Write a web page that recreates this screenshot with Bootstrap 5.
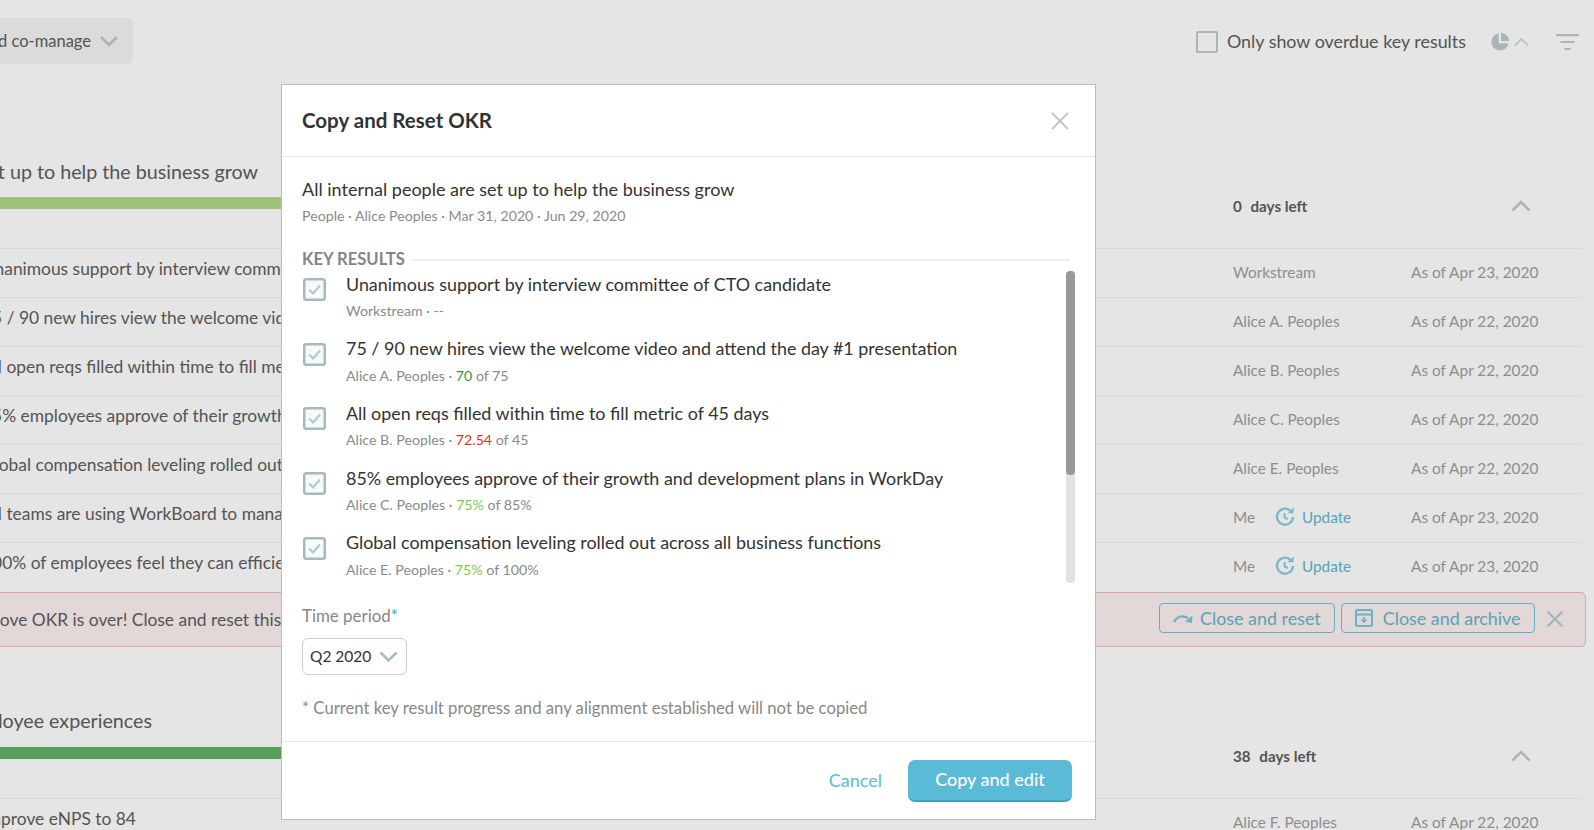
<!DOCTYPE html>
<html lang="en">
<head>
    <meta charset="UTF-8">
    <meta name="viewport" content="width=device-width, initial-scale=1.0">
    <title>Copy and Reset OKR</title>
    <link href="https://cdn.jsdelivr.net/npm/bootstrap@5.3.0/dist/css/bootstrap.min.css" rel="stylesheet">
    <style>
        html, body { overflow: hidden; height: 100%; }
        body { font-family: "Lato", "Liberation Sans", sans-serif; font-size: 17px; color: #333; background: #fff; }
        .modal-backdrop { --bs-backdrop-opacity: .1; }

        /* page behind the dialog (scrolled sideways, so it starts off screen) */
        .okr-page { margin-left: -13px; width: 1596px; color: #5e5e5e; }
        .okr-top { padding-top: 18px; }
        .owner-drop { width: 146px; height: 46px; background: #f4f4f4; border-radius: 5px; font-size: 16.5px; white-space: nowrap; overflow: hidden; padding-right: 14px; gap: 8px; }
        .owner-drop svg { flex: none; }
        .top-tools { margin-top: 12px; }
        .overdue-box { width: 22px; height: 22px; border: 2.5px solid #bccacf; border-radius: 2px; margin-right: 9px; }
        .overdue-label { font-size: 17.9px; line-height: 22px; margin-right: 24px; margin-bottom: 2px; }
        .filter-icon { margin-left: 27px; margin-right: 4px; }
        .okr-title { font-size: 19.7px; line-height: 28px; white-space: nowrap; margin-left: -300px; text-align: right; }
        .okr-title.first { margin-top: 94px; width: 571px; }
        .okr-title.second { margin-top: 60px; width: 465px; }
        .okr-head { height: 51px; margin-top: 11px; }
        .okr-head.second { margin-top: 12px; height: 51px; }
        .okr-bar { width: 1100px; height: 12px; flex: none; }
        .bar-light { background: #b1da8c; }
        .bar-dark { background: #64b065; }
        .days-left { margin-left: 146px; width: 278px; font-size: 15.2px; line-height: 22px; font-weight: 700; margin-top: -2px; }
        .days-left span { margin-right: 5px; }
        .head-chevron { margin-top: 3px; }
        .okr-row { height: 49px; border-top: 1px solid #f3f3f3; width: 1596px; }
        .okr-name { width: 1251px; margin-left: -5px; flex: none; white-space: nowrap; overflow: hidden; padding-bottom: 7px; font-size: 17.4px; }
        .okr-owner { width: 178px; flex: none; font-size: 15.3px; color: #9e9e9e; padding-bottom: 2px; }
        .okr-date { font-size: 15.4px; color: #9e9e9e; white-space: nowrap; }
        .me-label { width: 42px; }
        .update-link { color: #64b5cc; font-size: 15.3px; gap: 7px; }
        .okr-alert { margin: 1px 0 0 -10px; width: 1609px; height: 55px; background: #fcf1f1; border: 1px solid #f9b7b7; border-radius: 5px; }
        .alert-text { width: 1211px; margin-left: -30px; padding-top: 2px; flex: none; white-space: nowrap; overflow: hidden; font-size: 17.4px; }
        .btn-outline-okr { height: 30px; margin-bottom: 3px; border: 1px solid #6fc2dc; border-radius: 4px; color: #64b5cc; font-size: 17.9px; line-height: 28px; padding: 0 13px; gap: 7px; white-space: nowrap; }
        .btn-outline-okr.archive { margin-left: 6px; gap: 10px; }
        .alert-x { margin-left: 11px; margin-bottom: 2px; }

        /* dialog */
        .modal-dialog.okr-dialog { margin: 84px 0 0 281px; max-width: none; width: 815px; }
        .okr-dialog .modal-content { height: 736px; border: 1px solid #bcbcbc; border-radius: 0; }
        .okr-dialog .modal-header { height: 72px; padding: 0 26px 0 20px; border-bottom: 1px solid #e6e6e6; border-radius: 0; }
        .okr-dialog .modal-title { font-size: 20.5px; font-weight: 700; color: #333; }
        .okr-dialog .modal-body { padding: 20px 20px 0 20px; }
        .okr-dialog .modal-footer { height: 78px; padding: 0 19px 0 0; border-top: 1px solid #e6e6e6; border-radius: 0; flex-wrap: nowrap; gap: 18px; }
        .okr-name-main { font-size: 18px; line-height: 24px; }
        .okr-meta { font-size: 14.2px; line-height: 20px; color: #8a8a8a; margin-top: 5px; }
        .kr-head { margin-top: 23px; line-height: 20px; font-size: 16.6px; font-weight: 700; color: #858585; gap: 7px; }
        .kr-head hr { flex: 1; margin: 2px 5px 0 0; border: 0; border-top: 2px solid #eee; opacity: 1; }
        .kr-wrap { height: 312px; margin-top: 3px; }
        .kr-item { height: 64.7px; gap: 20px; }
        .kr-check { flex: none; margin-top: 6px; margin-left: 1px; }
        .kr-title { font-size: 17.9px; line-height: 24px; color: #333; white-space: nowrap; margin-top: -0.5px; }
        .kr-meta { font-size: 14.2px; line-height: 20px; margin-top: 5.5px; color: #8a8a8a; }
        .val-green { color: #2f9a34; }
        .val-red { color: #e0341c; }
        .val-lime { color: #7ec850; }
        .kr-scroll { width: 9px; height: 312px; background: #e2e2e2; border-radius: 4px; flex: none; margin-top: -1px; }
        .kr-thumb { height: 204px; background: #999; border-radius: 4px; }
        .time-label { font-size: 16.9px; line-height: 22px; color: #888; margin-top: 21px; }
        .time-label span { color: #35a7d0; }
        .time-select { width: 105px; height: 37px; margin-top: 11px; border: 1px solid #ccc; border-radius: 6px; padding: 0 8px 0 7px; font-size: 15.5px; color: #333; }
        .copy-note { margin-top: 22px; font-size: 16.7px; line-height: 22px; color: #888; }
        .cancel-link { color: #5abbd6; font-size: 18px; text-decoration: none; }
        .btn-copy { width: 164px; height: 42px; background: #5abbd6; border: 0; border-bottom: 2px solid #3fa3bf; border-radius: 7px; color: #fff; font-size: 18px; font-weight: 500; }
    </style>
</head>
<body>
    <div class="okr-page">
        <div class="okr-top d-flex align-items-start justify-content-between">
            <div class="owner-drop d-flex align-items-center justify-content-end">
                <span>Owned and co-manage</span>
                <svg width="20" height="12" viewBox="0 0 20 12"><path d="M2 2l8 8 8-8" fill="none" stroke="#bccacf" stroke-width="2.6"/></svg>
            </div>
            <div class="top-tools d-flex align-items-center">
                <div class="overdue-box"></div>
                <div class="overdue-label">Only show overdue key results</div>
                <svg width="20" height="20" viewBox="0 0 20 20"><path d="M8.7 1.5A8.600 8.600 0 1 0 18.500 11.300H8.700z" fill="#bccacf"/><path d="M11 0.800A8.500 8.500 0 0 1 19.200 9H11z" fill="#bccacf"/></svg>
                <svg class="ms-1" width="15" height="10" viewBox="0 0 15 10"><path d="M1 8.500l6.500-6.500 6.500 6.500" fill="none" stroke="#ccd7da" stroke-width="1.600"/></svg>
                <svg class="filter-icon" width="23" height="17" viewBox="0 0 23 17"><path d="M0 1.200h23M4.500 8h14M8.500 15h6" fill="none" stroke="#bccacf" stroke-width="2.200"/></svg>
            </div>
        </div>

        <div class="okr-title first">All internal people are set up to help the business grow</div>
        <div class="okr-head d-flex align-items-start">
            <div class="okr-bar bar-light"></div>
            <div class="days-left"><span>0</span> days left</div>
            <svg class="head-chevron" width="20" height="12" viewBox="0 0 20 12"><path d="M1.500 10.500L10 2l8.500 8.500" fill="none" stroke="#bccacf" stroke-width="2.600"/></svg>
        </div>

        <div class="okr-row d-flex align-items-center"><div class="okr-name">Unanimous support by interview committee of CTO candidate</div><div class="okr-owner">Workstream</div><div class="okr-date">As of Apr 23, 2020</div></div>
        <div class="okr-row d-flex align-items-center"><div class="okr-name">75 / 90 new hires view the welcome video and attend the day #1 presentation</div><div class="okr-owner">Alice A. Peoples</div><div class="okr-date">As of Apr 22, 2020</div></div>
        <div class="okr-row d-flex align-items-center"><div class="okr-name">All open reqs filled within time to fill metric of 45 days</div><div class="okr-owner">Alice B. Peoples</div><div class="okr-date">As of Apr 22, 2020</div></div>
        <div class="okr-row d-flex align-items-center"><div class="okr-name">85% employees approve of their growth and development plans in WorkDay</div><div class="okr-owner">Alice C. Peoples</div><div class="okr-date">As of Apr 22, 2020</div></div>
        <div class="okr-row d-flex align-items-center"><div class="okr-name">Global compensation leveling rolled out across all business functions</div><div class="okr-owner">Alice E. Peoples</div><div class="okr-date">As of Apr 22, 2020</div></div>
        <div class="okr-row d-flex align-items-center"><div class="okr-name">All teams are using WorkBoard to manage their key results</div>
            <div class="okr-owner d-flex align-items-center"><span class="me-label">Me</span>
                <span class="update-link d-flex align-items-center">
                    <svg width="20" height="20" viewBox="0 0 20 20"><path d="M15.200 3.600A8 8 0 1 0 18 10" fill="none" stroke="#8ccde1" stroke-width="2.400"/><path d="M12.500 6l6 .6.200-6z" fill="#8ccde1"/><path d="M9.600 6v4.600l3.200 1.400" fill="none" stroke="#8ccde1" stroke-width="2"/></svg>Update</span></div>
            <div class="okr-date">As of Apr 23, 2020</div></div>
        <div class="okr-row d-flex align-items-center"><div class="okr-name">100% of employees feel they can efficiently find what they need</div>
            <div class="okr-owner d-flex align-items-center"><span class="me-label">Me</span>
                <span class="update-link d-flex align-items-center">
                    <svg width="20" height="20" viewBox="0 0 20 20"><path d="M15.200 3.600A8 8 0 1 0 18 10" fill="none" stroke="#8ccde1" stroke-width="2.400"/><path d="M12.500 6l6 .6.200-6z" fill="#8ccde1"/><path d="M9.600 6v4.600l3.200 1.400" fill="none" stroke="#8ccde1" stroke-width="2"/></svg>Update</span></div>
            <div class="okr-date">As of Apr 23, 2020</div></div>

        <div class="okr-alert d-flex align-items-center">
            <div class="alert-text">The above OKR is over! Close and reset this OKR for the next time period</div>
            <div class="btn-outline-okr d-flex align-items-center">
                <svg width="20" height="11" viewBox="0 0 20 11"><path d="M1 9C4 3.500 9.500 2 15 5" fill="none" stroke="#7cc5dc" stroke-width="2.400"/><path d="M19.500 2.500l-.5 7.500-7-1.500z" fill="#7cc5dc"/></svg>
                Close and reset</div>
            <div class="btn-outline-okr archive d-flex align-items-center">
                <svg width="18" height="18" viewBox="0 0 18 18"><rect x="1" y="1" width="16" height="16" rx="1.500" fill="none" stroke="#7cc5dc" stroke-width="2"/><path d="M1 5.500h16" stroke="#7cc5dc" stroke-width="2"/><path d="M9 8v5M6.500 10.500L9 13l2.500-2.500" fill="none" stroke="#7cc5dc" stroke-width="1.600"/></svg>
                Close and archive</div>
            <svg class="alert-x" width="18" height="18" viewBox="0 0 18 18"><path d="M1.500 1.500l15 15M16.500 1.500l-15 15" stroke="#bccacf" stroke-width="2.400"/></svg>
        </div>

        <div class="okr-title second">Create great and memorable employee experiences</div>
        <div class="okr-head second d-flex align-items-start">
            <div class="okr-bar bar-dark"></div>
            <div class="days-left"><span>38</span> days left</div>
            <svg class="head-chevron" width="20" height="12" viewBox="0 0 20 12"><path d="M1.500 10.500L10 2l8.500 8.500" fill="none" stroke="#bccacf" stroke-width="2.600"/></svg>
        </div>
        <div class="okr-row d-flex align-items-center"><div class="okr-name">Improve eNPS to 84</div><div class="okr-owner">Alice F. Peoples</div><div class="okr-date">As of Apr 22, 2020</div></div>
    </div>

    <div class="modal-backdrop show"></div>

    <div class="modal d-block" tabindex="-1">
        <div class="modal-dialog okr-dialog">
            <div class="modal-content">
                <div class="modal-header">
                    <h5 class="modal-title">Copy and Reset OKR</h5>
                    <svg class="ms-auto" width="18" height="18" viewBox="0 0 18 18"><path d="M1 1l16 16M17 1L1 17" stroke="#c4c4c4" stroke-width="1.800"/></svg>
                </div>
                <div class="modal-body">
                    <div class="okr-name-main">All internal people are set up to help the business grow</div>
                    <div class="okr-meta">People · Alice Peoples · Mar 31, 2020 · Jun 29, 2020</div>
                    <div class="kr-head d-flex align-items-center">KEY RESULTS<hr></div>
                    <div class="kr-wrap d-flex justify-content-between">
                        <div id="krList"></div>
                        <div class="kr-scroll"><div class="kr-thumb"></div></div>
                    </div>
                    <div class="time-label">Time period<span>*</span></div>
                    <div class="time-select d-flex align-items-center justify-content-between">Q2 2020
                        <svg width="19" height="11" viewBox="0 0 19 11"><path d="M1.500 1.500l8 8 8-8" fill="none" stroke="#a9bcc3" stroke-width="2.600"/></svg>
                    </div>
                    <div class="copy-note">* Current key result progress and any alignment established will not be copied</div>
                </div>
                <div class="modal-footer">
                    <a class="cancel-link" href="#">Cancel</a>
                    <button type="button" class="btn-copy">Copy and edit</button>
                </div>
            </div>
        </div>
    </div>

    <script>
        const keyResults = [
            { title: 'Unanimous support by interview committee of CTO candidate', meta: 'Workstream · --' },
            { title: '75 / 90 new hires view the welcome video and attend the day #1 presentation', meta: 'Alice A. Peoples · <span class="val-green">70</span> of 75' },
            { title: 'All open reqs filled within time to fill metric of 45 days', meta: 'Alice B. Peoples · <span class="val-red">72.54</span> of 45' },
            { title: '85% employees approve of their growth and development plans in WorkDay', meta: 'Alice C. Peoples · <span class="val-lime">75%</span> of 85%' },
            { title: 'Global compensation leveling rolled out across all business functions', meta: 'Alice E. Peoples · <span class="val-lime">75%</span> of 100%' }
        ];
        document.getElementById('krList').innerHTML = keyResults.map(kr => `
            <div class="kr-item d-flex align-items-start">
                <svg class="kr-check" width="23" height="23" viewBox="0 0 23 23"><rect x="1.250" y="1.250" width="20.500" height="20.500" rx="2" fill="#f8fafa" stroke="#a6b9c0" stroke-width="2.500"/><path d="M6 11.500l4 4 7-8" fill="none" stroke="#b4c7ce" stroke-width="2.200"/></svg>
                <div>
                    <div class="kr-title">${kr.title}</div>
                    <div class="kr-meta">${kr.meta}</div>
                </div>
            </div>
        `).join('');
    </script>
    <script src="https://cdn.jsdelivr.net/npm/bootstrap@5.3.0/dist/js/bootstrap.bundle.min.js"></script>
</body>
</html>
